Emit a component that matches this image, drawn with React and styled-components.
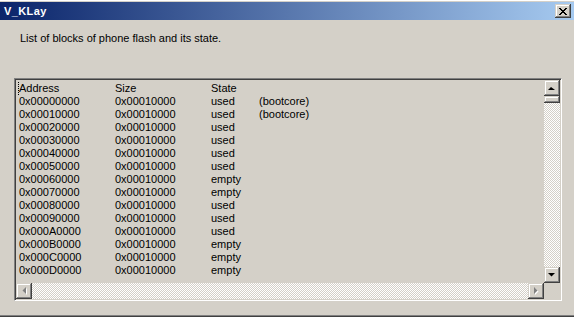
import React from "react";
import styled, { createGlobalStyle, css } from "styled-components";

const GlobalStyle = createGlobalStyle`
  html, body {
    margin: 0;
    padding: 0;
    background: #d4d0c8;
  }
  body {
    font-family: Tahoma, "Liberation Sans", Arial, sans-serif;
    font-size: 11px;
    color: #000;
  }
`;

const raised = css`
  background: #d4d0c8;
  box-shadow: inset -1px -1px 0 #404040, inset 1px 1px 0 #d4d0c8,
    inset -2px -2px 0 #808080, inset 2px 2px 0 #ffffff;
`;

const Window = styled.div`
  width: 574px;
  height: 317px;
  box-sizing: border-box;
  background: #d4d0c8;
  border-top: 1px solid #ffffff;
  border-bottom: 1px solid #404040;
  display: flex;
  flex-direction: column;
  overflow: hidden;
`;

const TitleBar = styled.div`
  height: 20px;
  margin-top: 1px;
  background: linear-gradient(to right, #0a246a, #a6caf0);
  display: flex;
  align-items: center;
  justify-content: space-between;
  padding: 0 3px 0 4px;
`;

const Title = styled.span`
  color: #fff;
  font-weight: bold;
  font-family: Tahoma, "Liberation Sans", sans-serif;
  font-size: 11px;
  letter-spacing: 0.4px;
`;

const CloseButton = styled.div`
  ${raised};
  width: 16px;
  height: 14px;
  display: flex;
  align-items: center;
  justify-content: center;
`;

const Body = styled.div`
  flex: 1;
  padding: 12px 11px 14px 14px;
  display: flex;
  flex-direction: column;
  border-bottom: 1px solid #808080;
`;

const Caption = styled.div`
  padding-left: 6px;
  line-height: 13px;
  height: 13px;
  margin-bottom: 33px;
`;

const ListBox = styled.div`
  width: 548px;
  height: 223px;
  box-sizing: border-box;
  border-top: 1px solid #808080;
  border-left: 1px solid #808080;
  border-right: 1px solid #ffffff;
  border-bottom: 1px solid #ffffff;
  display: grid;
  grid-template-columns: 1fr 16px;
  grid-template-rows: 1fr 16px;
  box-shadow: inset 1px 1px 0 #404040, inset -1px -1px 0 #d4d0c8;
  padding: 1px;
`;

const Rows = styled.div`
  overflow: hidden;
  padding: 2px 0 0 3px;
`;

const Row = styled.div`
  display: grid;
  grid-template-columns: 96px 96px 48px auto;
  height: 13px;
  line-height: 13px;
  white-space: nowrap;
`;

const Cell = styled.span`
  ${(p) =>
    p.$focus &&
    css`
      border-left: 1px dotted #000;
      margin-left: -1px;
    `}
`;

const VScroll = styled.div`
  display: flex;
  flex-direction: column;
  background: repeating-conic-gradient(#ffffff 0 25%, #d4d0c8 0 50%) 0 0 / 2px 2px;
`;

const HScroll = styled.div`
  display: flex;
  background: repeating-conic-gradient(#ffffff 0 25%, #d4d0c8 0 50%) 0 0 / 2px 2px;
`;

const Track = styled.div`
  flex: 1;
`;

const ScrollButton = styled.div`
  ${raised};
  width: 16px;
  height: 16px;
  flex: none;
  display: flex;
  align-items: center;
  justify-content: center;
`;

const Thumb = styled.div`
  ${raised};
  width: 16px;
  height: 7px;
  flex: none;
`;

const SizeBox = styled.div`
  background: #d4d0c8;
`;

const Arrow = ({ dir, disabled }) => {
  const pts = {
    up: "3,1 0,4 7,4",
    down: "0,0 7,0 3.5,3.5",
    left: "4,0 4,7 0.5,3.5",
    right: "0,0 0,7 3.5,3.5",
  }[dir];
  const vertical = dir === "up" || dir === "down";
  const w = vertical ? 7 : 4;
  const h = vertical ? 4 : 7;
  return (
    <svg width={w + 1} height={h + 1} viewBox={`0 0 ${w + 1} ${h + 1}`}>
      {disabled && (
        <polygon points={pts} fill="#ffffff" transform="translate(1,1)" />
      )}
      <polygon points={pts} fill={disabled ? "#808080" : "#000"} />
    </svg>
  );
};

const CloseGlyph = () => (
  <svg width="8" height="7" viewBox="0 0 8 7">
    <path
      d="M0 0h2v1h-2zM6 0h2v1h-2zM1 1h2v1h-2zM5 1h2v1h-2zM2 2h4v1h-4zM3 3h2v1h-2zM2 4h4v1h-4zM1 5h2v1h-2zM5 5h2v1h-2zM0 6h2v1h-2zM6 6h2v1h-2z"
      fill="#000"
    />
  </svg>
);

const states = [
  "used", "used", "used", "used", "used", "used", "empty",
  "empty", "used", "used", "used", "empty", "empty", "empty",
];

const blocks = states.map((state, i) => ({
  addr: "0x000" + i.toString(16).toUpperCase() + "0000",
  size: "0x00010000",
  state,
  note: i < 2 ? "(bootcore)" : "",
}));

export default function App() {
  return (
    <>
      <GlobalStyle />
      <Window>
        <TitleBar>
          <Title>V_KLay</Title>
          <CloseButton>
            <CloseGlyph />
          </CloseButton>
        </TitleBar>
        <Body>
          <Caption>List of blocks of phone flash and its state.</Caption>
          <ListBox>
            <Rows>
              <Row>
                <Cell $focus>Address</Cell>
                <Cell>Size</Cell>
                <Cell>State</Cell>
                <Cell />
              </Row>
              {blocks.map((b) => (
                <Row key={b.addr}>
                  <Cell>{b.addr}</Cell>
                  <Cell>{b.size}</Cell>
                  <Cell>{b.state}</Cell>
                  <Cell>{b.note}</Cell>
                </Row>
              ))}
            </Rows>
            <VScroll>
              <ScrollButton>
                <Arrow dir="up" />
              </ScrollButton>
              <Thumb />
              <Track />
              <ScrollButton>
                <Arrow dir="down" />
              </ScrollButton>
            </VScroll>
            <HScroll>
              <ScrollButton>
                <Arrow dir="left" disabled />
              </ScrollButton>
              <Track />
              <ScrollButton>
                <Arrow dir="right" disabled />
              </ScrollButton>
            </HScroll>
            <SizeBox />
          </ListBox>
        </Body>
      </Window>
    </>
  );
}
